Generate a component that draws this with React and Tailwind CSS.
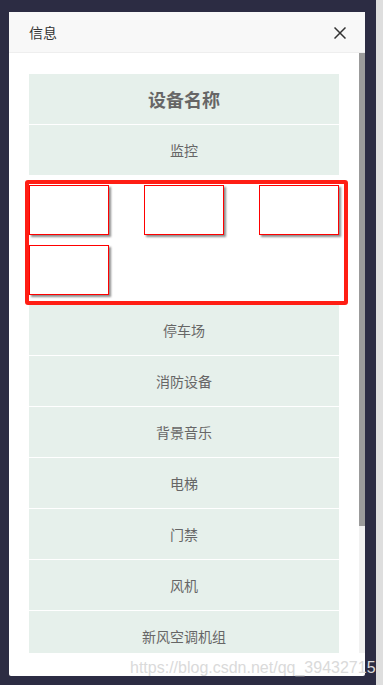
import React from "react";

const rowsAfter = ["停车场", "消防设备", "背景音乐", "电梯", "门禁", "风机", "新风空调机组"];

function Row({ children, bold }) {
  return (
    <div
      className={
        "h-[51px] flex items-center justify-center bg-[#e6f0eb] border-b border-white " +
        (bold ? "text-[18px] font-bold text-[#666]" : "text-[14px] text-[#666]")
      }
    >
      {children}
    </div>
  );
}

function Cam() {
  return <div className="w-[80px] h-[50px] bg-white border border-[#ff0000] shadow-[2px_2px_2px_rgba(0,0,0,0.45)]" />;
}

export default function App() {
  return (
    <div
      className="w-[383px] h-[685px] bg-[#2c2c43] flex overflow-hidden relative"
      style={{ fontFamily: '"Noto Sans CJK SC", "Noto Sans", sans-serif' }}
    >
      <div className="w-[376px] h-full pl-[9px] pt-[12px]">
        <div className="w-[356px] h-[664px] bg-white rounded-b-[2px] flex flex-col overflow-hidden">
          <div className="h-[41px] shrink-0 bg-[#f8f8f8] border-b border-[#eee] flex items-center justify-between pl-[20px] pr-[19px]">
            <span className="text-[14px] text-[#333]">信息</span>
            <svg width="12" height="12" viewBox="0 0 12 12" className="mt-[1px]">
              <path d="M0.5 0.5L11.5 11.5M11.5 0.5L0.5 11.5" stroke="#333" strokeWidth="1.5" />
            </svg>
          </div>
          <div className="h-[600px] shrink-0 flex">
            <div className="flex-1 overflow-hidden pt-[21px] pl-[20px] pr-[20px]">
              <div className="w-[310px]">
                <Row bold>设备名称</Row>
                <div className="h-[50px] flex items-center justify-center bg-[#e6f0eb] text-[14px] text-[#666]">监控</div>
                <div className="mt-[5px] ml-[-4px] w-[323px] border-4 border-[#ff1e14] rounded-[3px] pt-[1px] pb-[6px] bg-white">
                  <div className="w-[310px] grid grid-cols-[80px_80px_80px] justify-between gap-y-[10px]">
                    <Cam />
                    <Cam />
                    <Cam />
                    <Cam />
                  </div>
                </div>
                {rowsAfter.map((r) => (
                  <Row key={r}>{r}</Row>
                ))}
              </div>
            </div>
            <div className="w-[6px] h-full flex flex-col">
              <div className="h-[473px] bg-[#9b9b9b]" />
              <div className="flex-1 bg-[#f1f1f1]" />
            </div>
          </div>
        </div>
      </div>
      <div className="w-[7px] h-full bg-[#dedede]" />
      <div
        className="absolute left-[130px] top-[656px] text-[16px] text-[#dadada] whitespace-nowrap"
        style={{ fontFamily: '"Liberation Sans", Arial, sans-serif' }}
      >
        https://blog.csdn.net/qq_39432715
      </div>
    </div>
  );
}
